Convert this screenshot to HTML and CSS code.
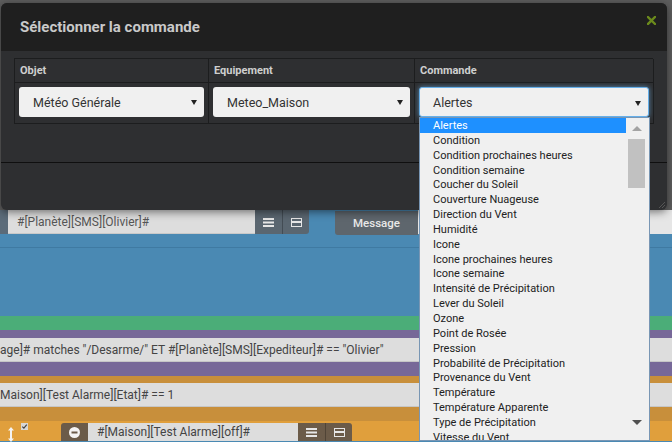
FILE: index.html
```html
<!DOCTYPE html>
<html lang="fr">
<head>
<meta charset="utf-8">
<title>Sélectionner la commande</title>
<link rel="stylesheet" href="styles.css">
</head>
<body>
<div class="page">
  <div class="bg-top"></div>
  <div class="row-sms">
    <div class="edge"></div>
    <div class="field">#[Planète][SMS][Olivier]#</div>
    <div class="btn slate">
      <svg width="11" height="9" viewBox="0 0 11 9"><rect x="0" y="0" width="11" height="2" fill="#e6e6e6"/><rect x="0" y="3.5" width="11" height="2" fill="#e6e6e6"/><rect x="0" y="7" width="11" height="2" fill="#e6e6e6"/></svg>
    </div>
    <div class="btn slate">
      <svg width="11" height="9" viewBox="0 0 11 9"><rect x="0.5" y="0.5" width="10" height="8" fill="none" stroke="#e6e6e6"/><rect x="1" y="3" width="9" height="2" fill="#e6e6e6"/></svg>
    </div>
    <div class="blue-gap"></div>
    <div class="msg-btn">Message</div>
    <div class="light-rest"></div>
  </div>
  <div class="blue"><div class="blue-line"></div></div>
  <div class="green"></div>
  <div class="purple thin"></div>
  <div class="cond">age]# matches "/Desarme/" ET #[Planète][SMS][Expediteur]# == "Olivier"</div>
  <div class="purple"></div>
  <div class="orange thin"></div>
  <div class="cond">Maison][Test Alarme][Etat]# == 1</div>
  <div class="orange"></div>
  <div class="action">
    <svg class="arrows" width="6" height="15" viewBox="0 0 6 15"><path d="M3 0 L6 3.5 L4 3.5 L4 11.5 L6 11.5 L3 15 L0 11.5 L2 11.5 L2 3.5 L0 3.5 Z" fill="#f3f3f3"/></svg>
    <span class="check">
      <svg width="7" height="7" viewBox="0 0 7 7"><rect width="7" height="7" fill="#d8d8d8"/><path d="M1.3 3.6 L2.9 5.2 L5.8 1.6" stroke="#444" stroke-width="1.2" fill="none"/></svg>
    </span>
    <div class="btn brown minus">
      <svg width="11" height="11" viewBox="0 0 11 11"><circle cx="5.5" cy="5.5" r="5.5" fill="#f4f4f4"/><rect x="2.5" y="4.5" width="6" height="2" fill="#6b5b4a"/></svg>
    </div>
    <div class="field bottom">#[Maison][Test Alarme][off]#</div>
    <div class="btn brown">
      <svg width="11" height="9" viewBox="0 0 11 9"><rect x="0" y="0" width="11" height="2" fill="#e6e6e6"/><rect x="0" y="3.5" width="11" height="2" fill="#e6e6e6"/><rect x="0" y="7" width="11" height="2" fill="#e6e6e6"/></svg>
    </div>
    <div class="btn brown">
      <svg width="11" height="9" viewBox="0 0 11 9"><rect x="0.5" y="0.5" width="10" height="8" fill="none" stroke="#e6e6e6"/><rect x="1" y="3" width="9" height="2" fill="#e6e6e6"/></svg>
    </div>
  </div>
</div>

<div class="modal">
  <div class="modal-header">
    <h1 class="modal-title">Sélectionner la commande</h1>
    <svg class="close" width="9" height="9" viewBox="0 0 9 9"><path d="M1 1 L8 8 M8 1 L1 8" stroke="#6b8a1c" stroke-width="2.4" stroke-linecap="square"/></svg>
  </div>
  <div class="modal-body">
    <div class="grid">
      <div class="th">Objet</div>
      <div class="th">Equipement</div>
      <div class="th">Commande</div>
      <div class="td"><div class="select">Météo Générale<span class="caret"></span></div></div>
      <div class="td"><div class="select">Meteo_Maison<span class="caret"></span></div></div>
      <div class="td"><div class="select focus">Alertes<span class="caret"></span></div></div>
    </div>
  </div>
  <div class="modal-footer">
    <svg class="grip" width="6" height="6" viewBox="0 0 6 6"><path d="M0 6 L6 0 M3 6 L6 3" stroke="#555" stroke-width="1"/></svg>
  </div>
</div>

<div class="dropdown">
  <ul class="options">
    <li class="selected">Alertes</li>
    <li>Condition</li>
    <li>Condition prochaines heures</li>
    <li>Condition semaine</li>
    <li>Coucher du Soleil</li>
    <li>Couverture Nuageuse</li>
    <li>Direction du Vent</li>
    <li>Humidité</li>
    <li>Icone</li>
    <li>Icone prochaines heures</li>
    <li>Icone semaine</li>
    <li>Intensité de Précipitation</li>
    <li>Lever du Soleil</li>
    <li>Ozone</li>
    <li>Point de Rosée</li>
    <li>Pression</li>
    <li>Probabilité de Précipitation</li>
    <li>Provenance du Vent</li>
    <li>Température</li>
    <li>Température Apparente</li>
    <li>Type de Précipitation</li>
    <li>Vitesse du Vent</li>
  </ul>
  <div class="scrollbar">
    <span class="arrow up"></span>
    <span class="thumb"></span>
    <span class="arrow down"></span>
  </div>
</div>
</body>
</html>
```

FILE: styles.css
```css
* { box-sizing: border-box; }
html, body { margin: 0; padding: 0; }
body {
  width: 672px;
  height: 442px;
  overflow: hidden;
  position: relative;
  font-family: Roboto, "Noto Sans", sans-serif;
  background: #4a89b3;
}
.page { display: flex; flex-direction: column; width: 672px; }

.bg-top { height: 210px; background: #5e5e5e; }

.row-sms { height: 25px; display: flex; align-items: stretch; background: #4a89b3; }
.row-sms .edge { width: 8px; background: #5b6b79; height: 24px; }
.field {
  background: #dddddd;
  color: #555;
  font-size: 12px;
  display: flex;
  align-items: center;
}
.row-sms .field { width: 247px; height: 24px; padding-left: 9px; border-bottom: 1px solid #c9c9c9; }
.btn { display: flex; align-items: center; justify-content: center; width: 27px; }
.btn + .btn { border-left: 1px solid rgba(0,0,0,0.25); }
.slate { background: #5a6670; height: 24px; }
.row-sms .btn:nth-child(4) { border-radius: 0 0 3px 0; }
.blue-gap { width: 26px; }
.msg-btn {
  width: 83px;
  margin-top: 1px;
  height: 24px;
  background: #5e666d;
  color: #e8e8e8;
  font-size: 11.5px;
  font-weight: 500;
  display: flex;
  align-items: center;
  justify-content: center;
  border-radius: 0 0 0 3px;
}
.light-rest { flex: 1; background: #e6e6e6; height: 24px; }

.blue { height: 81px; background: #4a89b3; padding-top: 12px; }
.blue-line { height: 1px; background: #3f7aa2; }
.green { height: 14px; background: #4bad78; }
.purple { height: 14px; background: #776898; }
.purple.thin { height: 8px; }
.orange { height: 14px; background: #c88f3b; }
.orange.thin { height: 7px; }
.cond {
  height: 24px;
  background: #dddddd;
  border-bottom: 1px solid #c6c6c6;
  color: #444;
  font-size: 12px;
  display: flex;
  align-items: center;
  white-space: nowrap;
}
.action {
  height: 20px;
  background: #e09f3c;
  display: flex;
  align-items: flex-start;
  padding-top: 2px;
}
.arrows { margin: 4px 0 0 8px; }
.check { margin: 0 0 0 7px; display: flex; }
.brown { background: #6b5b49; height: 18px; }
.minus { margin-left: 33px; width: 27px; border-radius: 3px 0 0 0; }
.field.bottom { width: 210px; height: 18px; padding-left: 9px; color: #444; }
.action .btn:last-child { border-radius: 0 3px 0 0; }

/* modal */
.modal {
  position: absolute;
  left: 1px;
  top: 3px;
  width: 666px;
  height: 207px;
  border-radius: 6px;
  background: #2e2f31;
  box-shadow: 0 2px 8px rgba(0,0,0,0.5);
  overflow: hidden;
  display: flex;
  flex-direction: column;
}
.modal-header {
  height: 48px;
  background: #1f1f1f;
  display: flex;
  align-items: center;
  justify-content: space-between;
  padding: 0 11px 0 19px;
}
.modal-title {
  margin: 0;
  font-size: 15px;
  font-weight: 700;
  color: #c9c9c9;
}
.close { align-self: flex-start; margin-top: 13px; }
.modal-body { padding: 7px 14px 0 13px; height: 111px; }
.grid {
  display: grid;
  grid-template-columns: 194px 206px 239px;
  grid-template-rows: 24px 41px;
  border-top: 1px solid #1c1d1e;
  border-left: 1px solid #1c1d1e;
}
.th, .td { border-right: 1px solid #1c1d1e; border-bottom: 1px solid #1c1d1e; }
.th {
  color: #cfcfcf;
  font-size: 11px;
  font-weight: 700;
  display: flex;
  align-items: center;
  padding-left: 5px;
}
.td { padding: 4px 4px 0 4px; }
.select {
  position: relative;
  height: 30px;
  background: #f0f0f0;
  border-radius: 3px;
  color: #333;
  font-size: 12.5px;
  display: flex;
  align-items: center;
  padding-left: 14px;
}
.select.focus {
  border: 1px solid #66afe9;
  box-shadow: 0 0 5px rgba(102,175,233,0.7);
  padding-left: 13px;
}
.caret {
  position: absolute;
  right: 7px;
  top: 13px;
  width: 0;
  height: 0;
  border-left: 3.5px solid transparent;
  border-right: 3.5px solid transparent;
  border-top: 5px solid #222;
}
.modal-footer {
  flex: 1;
  border-top: 1px solid #0f0f0f;
  position: relative;
}
.grip { position: absolute; right: 2px; bottom: 2px; }

/* dropdown list */
.dropdown {
  position: absolute;
  left: 419px;
  top: 117px;
  width: 231px;
  height: 324px;
  background: #f0f0f0;
  border: 1px solid #7896b4;
  display: flex;
  overflow: hidden;
}
.options {
  list-style: none;
  margin: 0;
  padding: 0;
  width: 206px;
  font-size: 11px;
  color: #222;
}
.options li { height: 14.85px; line-height: 15.5px; padding-left: 13px; white-space: nowrap; }
.options li.selected { background: #1e90ff; color: #fff; }
.scrollbar { flex: 1; position: relative; background: #f0f0f0; }
.arrow {
  position: absolute;
  left: 6px;
  width: 0;
  height: 0;
  border-left: 5px solid transparent;
  border-right: 5px solid transparent;
}
.arrow.up { top: 8px; border-bottom: 5px solid #a3a3a3; }
.arrow.down { top: 302px; border-top: 5px solid #505050; }
.thumb {
  position: absolute;
  left: 2px;
  top: 21px;
  width: 17px;
  height: 49px;
  background: #c1c1c1;
}
```
